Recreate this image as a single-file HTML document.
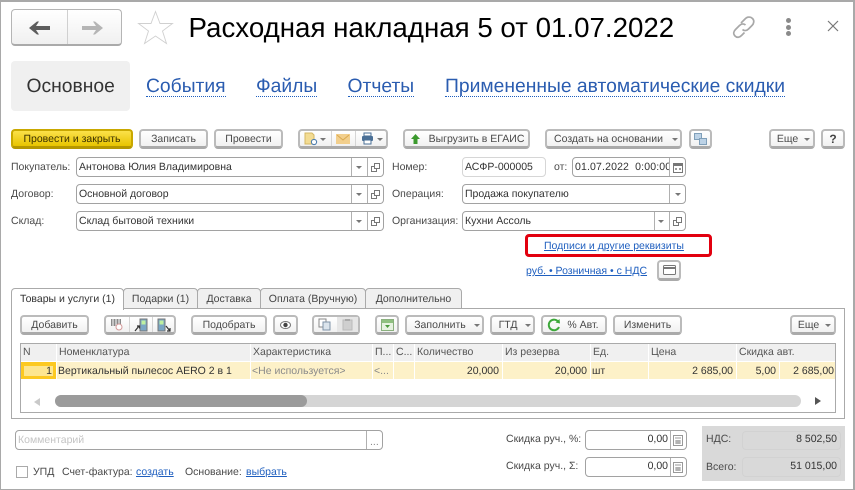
<!DOCTYPE html>
<html lang="ru"><head><meta charset="utf-8"><title>Расходная накладная</title>
<style>
html,body{margin:0;padding:0}
body{width:855px;height:490px;overflow:hidden;background:#fff;position:relative;font-family:"Liberation Sans",sans-serif;font-size:10.5px;color:#4a4a4a;text-rendering:geometricPrecision}
div,span,a,svg{position:absolute;box-sizing:border-box}
.t{white-space:nowrap;line-height:16px;filter:blur(.25px)}
.v{color:#333}
.l{color:#1f5fbf;text-decoration:underline;white-space:nowrap;line-height:16px;filter:blur(.25px)}
.nav{font-size:19.3px;line-height:24px;color:#2a5cb0;white-space:nowrap;top:75px;border-bottom:1px dotted #1f5fbf;height:22px}
.b{border:2px solid #bbb;border-bottom:3px solid #aaa;border-radius:4px;background:linear-gradient(#fff,#f1f1f1);color:#4a4a4a;text-align:center;line-height:16px;white-space:nowrap}
.f{border:1px solid #a2a2a2;border-radius:4px;background:#fff}
.d{width:1px;background:#b0b0b0;top:0;bottom:0}
.ar{width:0;height:0;border-left:3px solid transparent;border-right:3px solid transparent;border-top:3px solid #777}
.tab{top:288px;height:21px;background:#f0f0f0;border:1px solid #aaa;border-radius:4px 4px 0 0;text-align:center;line-height:20px;white-space:nowrap;color:#444}
.h{top:344px;height:17px;background:#f0f0f0;line-height:17px;padding-left:2px;white-space:nowrap;color:#555}
.c{top:362px;height:17px;background:#fdf1c8;line-height:18px;white-space:nowrap;color:#333}
.r{text-align:right;padding-right:2px}
</style></head><body>
<!-- window border -->
<div style="left:0;top:0;width:855px;height:490px;border:1px solid #a9a9a9;border-width:2px 2px 1px 1px"></div>

<!-- back / forward -->
<div style="left:11px;top:9px;width:111px;height:37px;border:1px solid #b5b5b5;border-bottom:2px solid #aaa;border-radius:4px;background:linear-gradient(#fff,#f0f0f0)"></div>
<div style="left:67px;top:10px;width:1px;height:34px;background:#d0d0d0"></div>
<svg style="left:28px;top:21px" width="24" height="14" viewBox="0 0 24 14"><path d="M1 7 L9 0.500 H11 L8 5 H22 V9 H8 L11 13.500 H9 Z" fill="#5d5d5d"/></svg>
<svg style="left:80px;top:21px" width="24" height="14" viewBox="0 0 24 14"><path d="M23 7 L15 0.500 H13 L16 5 H2 V9 H16 L13 13.500 H15 Z" fill="#b5b5b5"/></svg>
<!-- star -->
<svg style="left:137px;top:10px" width="37" height="35" viewBox="0 0 37 35"><path d="M18.500 1.500 L23 13.500 L35.500 13.500 L25.500 21 L29.500 33.500 L18.500 26 L7.500 33.500 L11.500 21 L1.500 13.500 L14 13.500 Z" fill="#fff" stroke="#d0d0d0" stroke-width=".9"/></svg>
<!-- title -->
<div style="left:188.500px;top:11px;font-size:27.7px;line-height:34px;color:#000;white-space:nowrap">Расходная накладная 5 от 01.07.2022</div>
<!-- link icon -->
<svg style="left:730px;top:13px" width="27" height="27" viewBox="0 0 27 27" fill="none" stroke="#a8a8a8" stroke-width="1.700"><path d="M11 10 L15 6 C17 3.500 20.500 3.500 22.500 5.500 C24.500 7.500 24 10.500 22 12.500 L18.500 16 C16.500 18 14 18 12.500 16.500"/><path d="M15.500 12 C14 10.500 11.500 10.500 9.500 12.500 L5.500 16.500 C3.500 18.500 3 21 5 23 C7 25 9.500 24.500 11.500 22.500 L14.500 19.500"/></svg>
<!-- dots -->
<div style="left:786px;top:18px;width:5px;height:5px;border-radius:50%;background:#8a8a8a"></div>
<div style="left:786px;top:25px;width:5px;height:5px;border-radius:50%;background:#8a8a8a"></div>
<div style="left:786px;top:31px;width:5px;height:5px;border-radius:50%;background:#8a8a8a"></div>
<!-- close -->
<svg style="left:826px;top:19px" width="14" height="14" viewBox="0 0 14 14"><path d="M2 2 L12 12 M12 2 L2 12" stroke="#777" stroke-width="1.200" fill="none"/></svg>

<!-- nav tabs -->
<div style="left:11px;top:61px;width:119px;height:50px;background:#f0f0f0;border-radius:4px"></div>
<div style="left:26.500px;top:75px;font-size:19.300px;line-height:24px;color:#333;white-space:nowrap">Основное</div>
<a class="nav" style="left:146px">События</a>
<a class="nav" style="left:256px">Файлы</a>
<a class="nav" style="left:347.500px">Отчеты</a>
<a class="nav" style="left:445px">Примененные автоматические скидки</a>

<!-- command bar -->
<div class="b" style="left:11px;top:129px;width:122px;height:20px;background:linear-gradient(#fbe14a,#e8c400);border-color:#c9a800;border-bottom-color:#b59700;color:#3a3000">Провести и закрыть</div>
<div class="b" style="left:139px;top:129px;width:69px;height:20px">Записать</div>
<div class="b" style="left:214px;top:129px;width:69px;height:20px">Провести</div>
<div class="b" style="left:298px;top:129px;width:90px;height:20px"></div>
<div class="d" style="left:331px;top:131px;height:15px;bottom:auto;background:#d5d5d5"></div>
<div class="d" style="left:355px;top:131px;height:15px;bottom:auto;background:#d5d5d5"></div>
<svg style="left:304px;top:132px" width="14" height="14" viewBox="0 0 14 14"><path d="M1 1 H8 L10 3 V12 H1 Z" fill="#f3dc93" stroke="#d4b763"/><circle cx="10" cy="10" r="2.600" fill="#fff" stroke="#4f7fae" stroke-width="1.100"/></svg>
<div class="ar" style="left:320px;top:138px"></div>
<svg style="left:336px;top:134px" width="14" height="10" viewBox="0 0 14 10"><rect x="0" y="0" width="14" height="10" fill="#f2cf8d"/><path d="M1 1 L7 6 L13 1" fill="none" stroke="#dba94f"/></svg>
<svg style="left:361px;top:132px" width="13" height="13" viewBox="0 0 13 13"><rect x="3" y="1" width="7" height="3" fill="#fff" stroke="#4a6f96"/><rect x="1" y="4" width="11" height="5" rx="1" fill="#4a6f96"/><rect x="3" y="8" width="7" height="4" fill="#fff" stroke="#4a6f96"/></svg>
<div class="ar" style="left:377px;top:138px"></div>
<div class="b" style="left:403px;top:129px;width:127px;height:20px;padding-left:20px">Выгрузить в ЕГАИС</div>
<svg style="left:410px;top:133px" width="11" height="12" viewBox="0 0 11 12"><path d="M5.500 1 L10 6 H7.500 V11 H3.500 V6 H1 Z" fill="#3c9a2e"/></svg>
<div class="b" style="left:545px;top:129px;width:137px;height:20px;padding-right:10px">Создать на основании</div>
<div class="ar" style="left:672px;top:138px"></div>
<div class="b" style="left:689px;top:129px;width:23px;height:20px"></div>
<svg style="left:694px;top:133px" width="13" height="12" viewBox="0 0 13 12"><rect x=".5" y=".5" width="7" height="6" fill="#bcd2e6" stroke="#7f9fb9"/><rect x="5.500" y="5.500" width="7" height="6" fill="#bcd2e6" stroke="#7f9fb9"/></svg>
<div class="b" style="left:769px;top:129px;width:46px;height:20px;padding-right:9px">Еще</div>
<div class="ar" style="left:804px;top:138px"></div>
<div class="b" style="left:821px;top:129px;width:24px;height:20px;font-weight:bold;color:#444;font-size:12px">?</div>

<!-- form left -->
<div class="t" style="left:11px;top:159px">Покупатель:</div>
<div class="t" style="left:11px;top:186px">Договор:</div>
<div class="t" style="left:11px;top:213px">Склад:</div>
<div class="f" style="left:76px;top:157px;width:308px;height:20px"></div>
<div class="f" style="left:76px;top:184px;width:308px;height:20px"></div>
<div class="f" style="left:76px;top:211px;width:308px;height:20px"></div>
<div class="t v" style="left:79px;top:159px">Антонова Юлия Владимировна</div>
<div class="t v" style="left:79px;top:186px">Основной договор</div>
<div class="t v" style="left:79px;top:213px">Склад бытовой техники</div>
<div class="d" style="left:351px;top:158px;height:18px;bottom:auto"></div>
<div class="d" style="left:367px;top:158px;height:18px;bottom:auto"></div>
<div class="d" style="left:351px;top:185px;height:18px;bottom:auto"></div>
<div class="d" style="left:367px;top:185px;height:18px;bottom:auto"></div>
<div class="d" style="left:351px;top:212px;height:18px;bottom:auto"></div>
<div class="d" style="left:367px;top:212px;height:18px;bottom:auto"></div>
<div class="ar" style="left:356px;top:166px"></div>
<div class="ar" style="left:356px;top:193px"></div>
<div class="ar" style="left:356px;top:220px"></div>
<svg style="left:371px;top:163px" width="9" height="9" viewBox="0 0 9 9" fill="#fff" stroke="#777"><rect x=".5" y="3.500" width="5" height="5"/><rect x="3.500" y=".5" width="5" height="5"/></svg>
<svg style="left:371px;top:190px" width="9" height="9" viewBox="0 0 9 9" fill="#fff" stroke="#777"><rect x=".5" y="3.500" width="5" height="5"/><rect x="3.500" y=".5" width="5" height="5"/></svg>
<svg style="left:371px;top:217px" width="9" height="9" viewBox="0 0 9 9" fill="#fff" stroke="#777"><rect x=".5" y="3.500" width="5" height="5"/><rect x="3.500" y=".5" width="5" height="5"/></svg>

<!-- form right -->
<div class="t" style="left:392px;top:159px">Номер:</div>
<div class="t" style="left:392px;top:186px">Операция:</div>
<div class="t" style="left:392px;top:213px">Организация:</div>
<div class="f" style="left:462px;top:157px;width:84px;height:20px;border-color:#d6d6d6"></div>
<div class="t v" style="left:465px;top:159px">АСФР-000005</div>
<div class="t" style="left:554px;top:159px">от:</div>
<div class="f" style="left:572px;top:157px;width:114px;height:20px"></div>
<div class="t v" style="left:575px;top:159px;width:94px;overflow:hidden;letter-spacing:.15px">01.07.2022 &nbsp;0:00:00</div>
<div class="d" style="left:669px;top:158px;height:18px;bottom:auto"></div>
<svg style="left:673px;top:163px" width="10" height="10" viewBox="0 0 10 10"><rect x=".5" y=".5" width="9" height="9" fill="#fff" stroke="#777"/><rect x="0" y="0" width="10" height="3" fill="#777"/><rect x="2" y="5" width="2" height="2" fill="#999"/><rect x="6" y="5" width="2" height="2" fill="#999"/></svg>
<div class="f" style="left:462px;top:184px;width:224px;height:20px"></div>
<div class="t v" style="left:465px;top:186px">Продажа покупателю</div>
<div class="d" style="left:669px;top:185px;height:18px;bottom:auto"></div>
<div class="ar" style="left:675px;top:193px"></div>
<div class="f" style="left:462px;top:211px;width:224px;height:20px"></div>
<div class="t v" style="left:465px;top:213px">Кухни Ассоль</div>
<div class="d" style="left:654px;top:212px;height:18px;bottom:auto"></div>
<div class="d" style="left:669px;top:212px;height:18px;bottom:auto"></div>
<div class="ar" style="left:658px;top:220px"></div>
<svg style="left:673px;top:217px" width="9" height="9" viewBox="0 0 9 9" fill="#fff" stroke="#777"><rect x=".5" y="3.500" width="5" height="5"/><rect x="3.500" y=".5" width="5" height="5"/></svg>

<!-- red box & links -->
<div style="left:525px;top:234px;width:187px;height:23px;border:3px solid #e2000f;border-radius:4px"></div>
<a class="l" style="left:544px;top:238px">Подписи и другие реквизиты</a>
<a class="l" style="left:526px;top:263px">руб. • Розничная • с НДС</a>
<div class="b" style="left:657px;top:260px;width:24px;height:21px"></div>
<svg style="left:663px;top:265px" width="13" height="10" viewBox="0 0 13 10"><rect x=".5" y=".5" width="12" height="9" rx="1" fill="#fff" stroke="#777"/><rect x="1" y="2" width="11" height="2" fill="#777"/></svg>

<!-- tabs panel -->
<div style="left:11px;top:308px;width:834px;height:111px;border:1px solid #aaa"></div>
<div class="tab" style="left:123px;width:75px">Подарки (1)</div>
<div class="tab" style="left:197px;width:64px">Доставка</div>
<div class="tab" style="left:260px;width:106px">Оплата (Вручную)</div>
<div class="tab" style="left:365px;width:97px">Дополнительно</div>
<div class="tab" style="left:11px;width:113px;height:22px;background:#fff;border-bottom:0;color:#333">Товары и услуги (1)</div>

<!-- toolbar -->
<div class="b" style="left:20px;top:315px;width:69px;height:20px">Добавить</div>
<div class="b" style="left:104px;top:315px;width:72px;height:20px"></div>
<div class="d" style="left:129px;top:317px;height:15px;bottom:auto;background:#d5d5d5"></div>
<div class="d" style="left:152px;top:317px;height:15px;bottom:auto;background:#d5d5d5"></div>
<svg style="left:110px;top:318px" width="14" height="14" viewBox="0 0 14 14"><path d="M1 1 H11 V8 H1 Z" fill="#8a8a8a"/><path d="M3 1V8M6 1V8M9 1V8" stroke="#fff"/><circle cx="9" cy="9" r="3" fill="#fff" stroke="#d59a9a"/></svg>
<svg style="left:134px;top:318px" width="14" height="14" viewBox="0 0 14 14"><rect x="6" y="1" width="7" height="12" fill="#7aa6c4" stroke="#777"/><rect x="7.500" y="2.500" width="4" height="4" fill="#bff0a0"/><path d="M1 13 L5 8 M3 8 H5.500 V10.500" stroke="#333" stroke-width="1.200" fill="none"/></svg>
<svg style="left:157px;top:318px" width="14" height="14" viewBox="0 0 14 14"><rect x="1" y="1" width="7" height="12" fill="#7aa6c4" stroke="#777"/><rect x="2.500" y="2.500" width="4" height="4" fill="#bff0a0"/><path d="M9 8 L13 13 M13 10 V13 H10" stroke="#333" stroke-width="1.200" fill="none"/></svg>
<div class="b" style="left:191px;top:315px;width:76px;height:20px">Подобрать</div>
<div class="b" style="left:273px;top:315px;width:25px;height:20px"></div>
<svg style="left:280px;top:321px" width="11" height="8" viewBox="0 0 11 8"><ellipse cx="5.500" cy="4" rx="5" ry="3.500" fill="#fff" stroke="#777"/><circle cx="5.500" cy="4" r="2.200" fill="#444"/></svg>
<div class="b" style="left:312px;top:315px;width:48px;height:20px"></div>
<div style="left:337px;top:317px;width:21px;height:15px;background:#e6e6e6"></div>
<svg style="left:318px;top:318px" width="13" height="13" viewBox="0 0 13 13"><rect x="1" y="1" width="7" height="8" fill="#fff" stroke="#888"/><rect x="5" y="4" width="7" height="8" fill="#dbe4ec" stroke="#7f93a8"/></svg>
<svg style="left:341px;top:318px" width="13" height="13" viewBox="0 0 13 13"><rect x="2" y="2" width="9" height="10" fill="#cfcfcf" stroke="#bbb"/><rect x="4" y="1" width="5" height="2" fill="#aaa"/></svg>
<div class="b" style="left:375px;top:315px;width:24px;height:20px"></div>
<svg style="left:381px;top:319px" width="13" height="12" viewBox="0 0 13 12"><rect x=".5" y=".5" width="12" height="11" fill="#e6f2e0" stroke="#8ab07e"/><rect x="1" y="1" width="11" height="3" fill="#8fc080"/><path d="M4 6 H9 L6.500 9 Z" fill="#4a9a3c"/></svg>
<div class="b" style="left:405px;top:315px;width:79px;height:20px;padding-right:9px">Заполнить</div>
<div class="ar" style="left:474px;top:324px"></div>
<div class="b" style="left:490px;top:315px;width:45px;height:20px;padding-right:9px">ГТД</div>
<div class="ar" style="left:525px;top:324px"></div>
<div class="b" style="left:541px;top:315px;width:66px;height:20px;padding-left:18px">% Авт.</div>
<svg style="left:547px;top:318px" width="14" height="14" viewBox="0 0 14 14" fill="none"><path d="M11.500 4 A5.300 5.300 0 1 0 12 9" stroke="#3da83a" stroke-width="2"/><path d="M8.500 4.500 L13 5.500 L12.500 1 Z" fill="#3da83a"/></svg>
<div class="b" style="left:613px;top:315px;width:69px;height:20px">Изменить</div>
<div class="b" style="left:790px;top:315px;width:46px;height:20px;padding-right:9px">Еще</div>
<div class="ar" style="left:825px;top:324px"></div>

<!-- table -->
<div style="left:20px;top:343px;width:816px;height:70px;border:1px solid #aaa"></div>
<div class="h" style="left:21px;width:35px">N</div>
<div class="h" style="left:57px;width:193px">Номенклатура</div>
<div class="h" style="left:251px;width:121px">Характеристика</div>
<div class="h" style="left:373px;width:20px">П...</div>
<div class="h" style="left:394px;width:20px">С...</div>
<div class="h" style="left:415px;width:87px">Количество</div>
<div class="h" style="left:503px;width:87px">Из резерва</div>
<div class="h" style="left:591px;width:57px">Ед.</div>
<div class="h" style="left:649px;width:87px">Цена</div>
<div class="h" style="left:737px;width:98px">Скидка авт.</div>
<div class="c r" style="left:21px;width:35px;background:#fde690;border:3px solid #fcc922;border-top-width:4px;line-height:10px;padding-right:1px;overflow:visible">1</div>
<div class="c" style="left:57px;width:193px;padding-left:1px">Вертикальный пылесос AERO 2 в 1</div>
<div class="c" style="left:251px;width:121px;padding-left:1px;color:#8a8a8a">&lt;Не используется&gt;</div>
<div class="c" style="left:373px;width:20px;padding-left:1px;color:#8a8a8a">&lt;...</div>
<div class="c" style="left:394px;width:20px"></div>
<div class="c r" style="left:415px;width:87px;padding-right:3px">20,000</div>
<div class="c r" style="left:503px;width:87px;padding-right:3px">20,000</div>
<div class="c" style="left:591px;width:57px;padding-left:1px">шт</div>
<div class="c r" style="left:649px;width:87px;padding-right:3px">2 685,00</div>
<div class="c r" style="left:737px;width:42px;padding-right:3px">5,00</div>
<div class="c r" style="left:780px;width:55px;padding-right:1px">2 685,00</div>
<!-- scrollbar -->
<div style="left:55px;top:395px;width:746px;height:12px;background:#d5d5d5;border-radius:6px"></div>
<div style="left:55px;top:395px;width:252px;height:12px;background:#9b9b9b;border-radius:6px"></div>
<div style="left:34px;top:398px;width:0;height:0;border:4px solid transparent;border-left:0;border-right:6px solid #c9c9c9"></div>
<div style="left:815px;top:397px;width:0;height:0;border:4px solid transparent;border-right:0;border-left:6px solid #555"></div>

<!-- footer -->
<div class="f" style="left:15px;top:430px;width:368px;height:20px"></div>
<div class="t" style="left:18px;top:432px;color:#c4c4c4">Комментарий</div>
<div class="d" style="left:366px;top:431px;height:18px;bottom:auto"></div>
<div class="t" style="left:370px;top:434px;color:#888">...</div>
<div style="left:16px;top:466px;width:12px;height:12px;border:1px solid #aaa;background:#fff"></div>
<div class="t" style="left:33px;top:464px">УПД</div>
<div class="t" style="left:62px;top:464px">Счет-фактура:</div>
<a class="l" style="left:136px;top:464px">создать</a>
<div class="t" style="left:185px;top:464px">Основание:</div>
<a class="l" style="left:246px;top:464px">выбрать</a>

<div class="t" style="left:506px;top:431px">Скидка руч., %:</div>
<div class="t" style="left:506px;top:458px">Скидка руч., Σ:</div>
<div class="f" style="left:585px;top:430px;width:102px;height:20px"></div>
<div class="f" style="left:585px;top:457px;width:102px;height:20px"></div>
<div class="t v" style="left:590px;top:431px;width:78px;text-align:right">0,00</div>
<div class="t v" style="left:590px;top:458px;width:78px;text-align:right">0,00</div>
<div class="d" style="left:670px;top:431px;height:18px;bottom:auto"></div>
<div class="d" style="left:670px;top:458px;height:18px;bottom:auto"></div>
<svg style="left:673px;top:435px" width="10" height="11" viewBox="0 0 10 11"><rect x=".5" y=".5" width="9" height="10" fill="#fff" stroke="#999"/><path d="M2 3H8M2 6H8M2 8H8M4 5V9M6 5V9" stroke="#999" fill="none"/></svg>
<svg style="left:673px;top:462px" width="10" height="11" viewBox="0 0 10 11"><rect x=".5" y=".5" width="9" height="10" fill="#fff" stroke="#999"/><path d="M2 3H8M2 6H8M2 8H8M4 5V9M6 5V9" stroke="#999" fill="none"/></svg>

<div style="left:702px;top:426px;width:143px;height:55px;background:#d9d9d9"></div>
<div style="left:742px;top:431px;width:99px;height:19px;border:1px solid #d2d2d2;border-radius:4px"></div>
<div style="left:742px;top:457px;width:99px;height:20px;border:1px solid #d2d2d2;border-radius:4px"></div>
<div class="t" style="left:706px;top:431px">НДС:</div>
<div class="t" style="left:706px;top:459px">Всего:</div>
<div class="t v" style="left:759px;top:431px;width:78px;text-align:right">8 502,50</div>
<div class="t v" style="left:759px;top:458px;width:78px;text-align:right">51 015,00</div>
</body></html>
